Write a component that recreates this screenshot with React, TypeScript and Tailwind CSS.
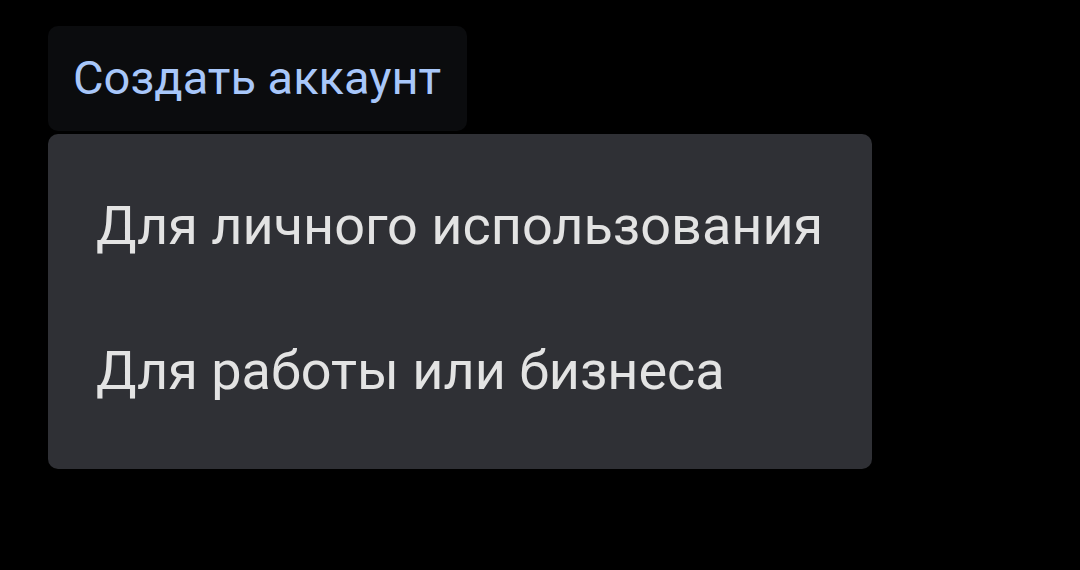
const items = ['Для личного использования', 'Для работы или бизнеса'];

export default function App() {
  return (
    <div className="h-[570px] w-[1080px] bg-black pl-[48px] pt-[26px] font-['Roboto',sans-serif]">
      <button className="flex h-[105px] w-[419px] items-center rounded-[10px] bg-[#0b0c0e] pl-[25px] text-[47px] text-[#a8c7fa]">
        Создать аккаунт
      </button>
      <div className="mt-[3px] flex h-[335px] w-[824px] flex-col rounded-[10px] bg-[#2f3035] pt-[19px]">
        {items.map((item) => (
          <div key={item} className="flex h-[145px] items-center pl-[48px] text-[54px] text-[#e3e3e3]">
            {item}
          </div>
        ))}
      </div>
    </div>
  );
}
